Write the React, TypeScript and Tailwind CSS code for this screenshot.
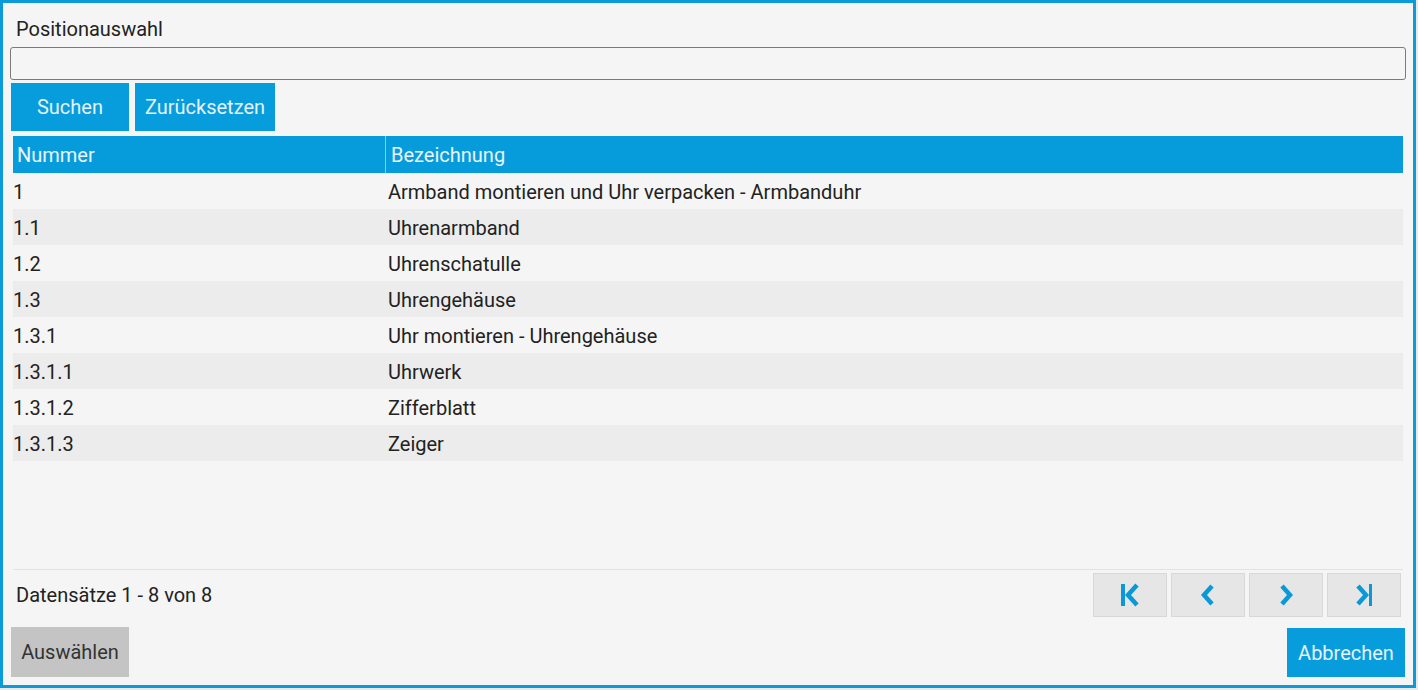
import React from "react";

const rows: [string, string][] = [
  ["1", "Armband montieren und Uhr verpacken - Armbanduhr"],
  ["1.1", "Uhrenarmband"],
  ["1.2", "Uhrenschatulle"],
  ["1.3", "Uhrengehäuse"],
  ["1.3.1", "Uhr montieren - Uhrengehäuse"],
  ["1.3.1.1", "Uhrwerk"],
  ["1.3.1.2", "Zifferblatt"],
  ["1.3.1.3", "Zeiger"],
];

function PagerIcon({ kind }: { kind: "first" | "prev" | "next" | "last" }) {
  return (
    <svg width="26" height="26" viewBox="0 0 26 26" className="text-[#0a98d6]">
      {kind === "first" && (
        <>
          <rect x="4" y="2" width="4" height="22" fill="currentColor" />
          <path d="M20 3 L11 13 L20 23" fill="none" stroke="currentColor" strokeWidth="4.5" />
        </>
      )}
      {kind === "prev" && (
        <path d="M17 4 L9 13 L17 22" fill="none" stroke="currentColor" strokeWidth="4.5" />
      )}
      {kind === "next" && (
        <path d="M9 4 L17 13 L9 22" fill="none" stroke="currentColor" strokeWidth="4.5" />
      )}
      {kind === "last" && (
        <>
          <path d="M7 4 L15 13 L7 22" fill="none" stroke="currentColor" strokeWidth="4.5" />
          <rect x="18" y="2" width="3" height="22" fill="currentColor" />
        </>
      )}
    </svg>
  );
}

export default function App() {
  return (
    <div className="h-[690px] w-[1418px] bg-[#e9e9e9] font-['Roboto',sans-serif] text-[20px] text-[#222]">
      <div className="flex h-[688px] w-[1416px] flex-col border-[3px] border-[#0a9bd8] bg-[#f5f5f5] pl-[7px] pr-[7px]">
        <div className="mt-[15px] ml-[6px] leading-[22px]">Positionauswahl</div>
        <input
          className="mt-[7px] h-[33px] w-[1396px] rounded-[3px] border border-[#7a7a7a] bg-[#f5f5f5] outline-none"
          type="text"
        />
        <div className="mt-[3px] ml-[1px] flex gap-[6px]">
          <button className="h-[48px] w-[118px] bg-[#079cdc] text-[#e4f3fb]">Suchen</button>
          <button className="h-[48px] w-[140px] bg-[#079cdc] text-[#e4f3fb]">Zurücksetzen</button>
        </div>
        <div className="mt-[5px] ml-[3px] w-[1390px]">
          <div className="flex h-[37px] items-center bg-[#069cdc] text-[#e8f5fc]">
            <div className="w-[372px] pl-[4px]">Nummer</div>
            <div className="h-full w-px bg-[#8ccbea]" />
            <div className="pl-[5px]">Bezeichnung</div>
          </div>
          {rows.map(([n, b], i) => (
            <div
              key={n}
              className={`flex h-[36px] items-center pt-[1px] ${i % 2 === 1 ? "bg-[#ececec]" : "bg-[#f5f5f5]"}`}
            >
              <div className="w-[372px]">{n}</div>
              <div className="pl-[3px]">{b}</div>
            </div>
          ))}
        </div>
        <div className="mt-[108px] ml-[3px] w-[1390px] border-t border-[#e2e2e2]" />
        <div className="ml-[3px] mt-[2px] flex w-[1390px] items-center justify-between">
          <div className="pl-[3px]">Datensätze 1 - 8 von 8</div>
          <div className="flex gap-[4px] pr-[2px] pt-[1px]">
            {(["first", "prev", "next", "last"] as const).map((k) => (
              <button
                key={k}
                className="flex h-[44px] w-[74px] items-center justify-center border border-[#d8d8d8] bg-[#e6e6e6]"
              >
                <PagerIcon kind={k} />
              </button>
            ))}
          </div>
        </div>
        <div className="mt-[10px] ml-[1px] flex w-[1394px] items-start justify-between">
          <button className="h-[50px] w-[118px] bg-[#c4c4c4] text-[#333]">Auswählen</button>
          <button className="mt-[1px] h-[49px] w-[118px] bg-[#079cdc] text-[#e4f3fb]">Abbrechen</button>
        </div>
      </div>
    </div>
  );
}
